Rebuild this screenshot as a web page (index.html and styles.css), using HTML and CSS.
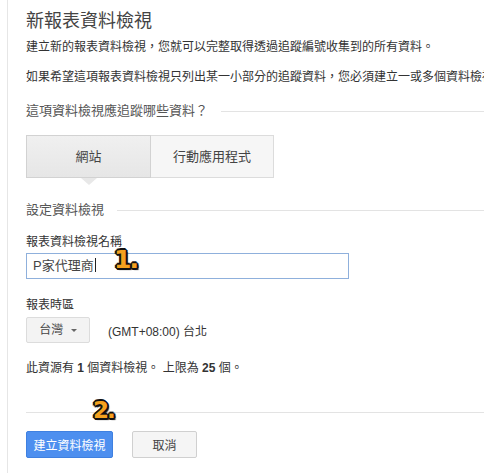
FILE: index.html
```html
<!DOCTYPE html>
<html lang="zh-Hant">
<head>
<meta charset="UTF-8">
<meta name="viewport" content="width=device-width, initial-scale=1.0">
<title>新報表資料檢視</title>
<link rel="stylesheet" href="styles.css">
</head>
<body>
<div class="page">
    <h1>新報表資料檢視</h1>
    <p class="intro">建立新的報表資料檢視，您就可以完整取得透過追蹤編號收集到的所有資料。</p>
    <p class="intro second">如果希望這項報表資料檢視只列出某一小部分的追蹤資料，您必須建立一或多個資料檢視篩選器。</p>

    <!-- What to track -->
    <h3 class="section-title">這項資料檢視應追蹤哪些資料？</h3>
    <div class="tabs">
        <div class="tab active">網站</div>
        <div class="tab">行動應用程式</div>
    </div>

    <!-- View settings -->
    <h3 class="section-title settings">設定資料檢視</h3>

    <label class="field-label">報表資料檢視名稱</label>
    <div class="name-row">
        <div class="text-input">P家代理商<span class="caret"></span></div>
        <span class="step step-one">1.</span>
    </div>

    <label class="field-label zone-label">報表時區</label>
    <div class="zone-row">
        <div class="dropdown">台灣 <span class="arrow"></span></div>
        <span class="zone-text">(GMT+08:00) 台北</span>
    </div>

    <p class="limit">此資源有 <b>1</b> 個資料檢視。 上限為 <b>25</b> 個。</p>

    <div class="actions">
        <span class="step step-two">2.</span>
        <button class="btn primary">建立資料檢視</button>
        <button class="btn">取消</button>
    </div>
</div>
</body>
</html>
```

FILE: styles.css
```css
body {
    margin: 0;
    font-family: "Liberation Sans", "Noto Sans CJK TC", sans-serif;
    color: #333;
    background: #fff;
    overflow: hidden;
    height: 473px;
}

.page {
    margin-left: 7px;
    width: 458px;
    height: 473px;
    border-left: 1px solid #e6e6e6;
    padding-left: 18px;
}

h1 {
    margin: 0;
    padding-top: 9px;
    font-size: 18px;
    line-height: 24px;
    font-weight: normal;
    color: #444;
}

.intro {
    margin: 5px 0 0;
    font-size: 12px;
    line-height: 18px;
    white-space: nowrap;
    overflow: hidden;
}

.intro.second {
    margin-top: 12px;
}

.section-title {
    display: flex;
    align-items: center;
    margin: 16px 0 0;
    font-size: 13px;
    line-height: 18px;
    font-weight: normal;
    color: #555;
}

.section-title::after {
    content: "";
    flex: 1;
    border-top: 1px solid #e3e3e3;
    margin-left: 13px;
}

.section-title.settings {
    margin-top: 23px;
}

.tabs {
    display: flex;
    margin-top: 15px;
}

.tab {
    width: 122px;
    height: 41px;
    line-height: 41px;
    text-align: center;
    font-size: 13px;
    color: #444;
    background: #f6f6f6;
    border: 1px solid #dcdcdc;
    border-left: none;
}

.tab.active {
    width: 123px;
    position: relative;
    background: linear-gradient(#f0f0f0, #e6e6e6);
    border: 1px solid #d2d2d2;
}

.tab.active::after {
    content: "";
    position: absolute;
    left: 54px;
    bottom: -8px;
    border-left: 8px solid transparent;
    border-right: 8px solid transparent;
    border-top: 7px solid #e8e8e8;
}

.field-label {
    display: block;
    margin-top: 14px;
    font-size: 12px;
    line-height: 18px;
    color: #333;
}

.zone-label {
    margin-top: 17px;
}

.name-row {
    position: relative;
    margin-top: 2px;
}

.text-input {
    width: 309px;
    height: 24px;
    line-height: 24px;
    padding: 0 6px;
    border: 1px solid #8fb0dc;
    font-size: 13px;
    color: #444;
}

.caret {
    display: inline-block;
    width: 1px;
    height: 14px;
    margin-left: 1px;
    vertical-align: -2px;
    background: #222;
}

.step {
    position: absolute;
    font-family: "DejaVu Sans", sans-serif;
    font-weight: bold;
    color: #f5a11f;
    text-shadow:
        -2px 0 0 #111, 2px 0 0 #111, 0 -2px 0 #111, 0 2px 0 #111,
        -1px -1px 0 #111, 1px 1px 0 #111, -1px 1px 0 #111, 1px -1px 0 #111,
        2px 2px 1px #111;
    letter-spacing: -2px;
}

.step-one {
    left: 88px;
    top: -8px;
    font-size: 25px;
}

.step-two {
    left: 67px;
    top: -16px;
    font-size: 23px;
}

.zone-row {
    display: flex;
    align-items: center;
    margin-top: 3px;
}

.dropdown {
    width: 62px;
    height: 24px;
    line-height: 24px;
    text-align: center;
    font-size: 12px;
    color: #444;
    background: #f3f3f3;
    border: 1px solid #dcdcdc;
    border-radius: 2px;
}

.arrow {
    display: inline-block;
    margin-left: 4px;
    vertical-align: 2px;
    border-left: 3px solid transparent;
    border-right: 3px solid transparent;
    border-top: 3px solid #666;
}

.zone-text {
    margin-left: 18px;
    font-size: 12px;
    color: #333;
}

.limit {
    margin: 16px 0 0;
    font-size: 12px;
    line-height: 18px;
}

.actions {
    position: relative;
    margin-top: 35px;
    padding-top: 18px;
    border-top: 1px solid #e3e3e3;
    display: flex;
    gap: 19px;
}

.btn {
    height: 27px;
    padding: 0;
    font-family: inherit;
    font-size: 12px;
    color: #444;
    background: #f5f5f5;
    border: 1px solid #d0d0d0;
    border-radius: 2px;
    width: 65px;
}

.btn.primary {
    width: 87px;
    color: #fff;
    background: #4d8fef;
    border-color: #3f80e0;
}
```
